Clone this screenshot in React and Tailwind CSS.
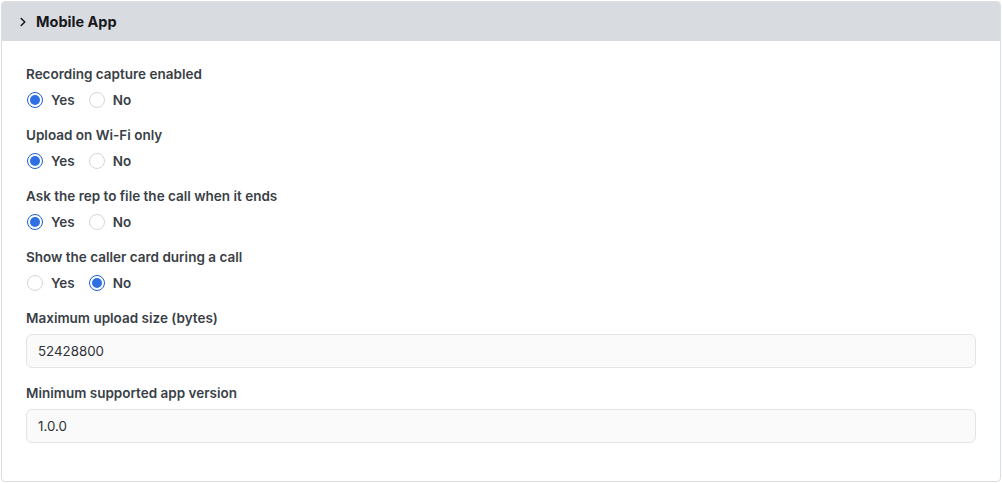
import React, { useState } from 'react';

const font = { fontFamily: 'Inter, "Noto Sans", sans-serif' };

function Radio({ checked, label, onClick }) {
  return (
    <label className="flex items-center gap-[8px] cursor-pointer" onClick={onClick}>
      <span
        className={
          checked
            ? 'w-[16px] h-[16px] rounded-full border border-[#1d5fd6] bg-white flex items-center justify-center'
            : 'w-[16px] h-[16px] rounded-full border border-[#d4d6da] bg-white'
        }
      >
        {checked && <span className="w-[10px] h-[10px] rounded-full bg-[#2f6fe4]" />}
      </span>
      <span className="text-[13.5px] font-semibold text-[#3a3f47] leading-[20px]">{label}</span>
    </label>
  );
}

function YesNo({ title, initial }) {
  const [value, setValue] = useState(initial);
  return (
    <div className="flex flex-col gap-[6px]">
      <div className="text-[13.5px] font-semibold text-[#3a3f47] leading-[20px]">{title}</div>
      <div className="flex items-center gap-[14px] pl-[1px]">
        <Radio checked={value === 'yes'} label="Yes" onClick={() => setValue('yes')} />
        <Radio checked={value === 'no'} label="No" onClick={() => setValue('no')} />
      </div>
    </div>
  );
}

function Field({ title, value }) {
  return (
    <div className="flex flex-col gap-[6px]">
      <div className="text-[13.5px] font-semibold text-[#3a3f47] leading-[20px]">{title}</div>
      <input
        defaultValue={value}
        className="h-[34px] w-full rounded-[6px] border border-[#e3e4e7] bg-[#fafafa] px-[11px] text-[13.3px] text-[#2f3237] outline-none"
        style={font}
      />
    </div>
  );
}

export default function App() {
  return (
    <div className="w-[1002px] h-[483px] bg-white p-[1px]" style={font}>
      <div className="h-[481px] border border-[#dcdde0] rounded-[4px] overflow-hidden flex flex-col">
        <div className="h-[39px] bg-[#d8dbe0] flex items-center gap-[8px] pl-[16px] shrink-0">
          <svg width="10" height="10" viewBox="0 0 10 10" fill="none">
            <path d="M3.2 1.5 L6.8 5 L3.2 8.5" stroke="#16181c" strokeWidth="1.5" strokeLinecap="round" strokeLinejoin="round" />
          </svg>
          <span className="text-[14.5px] font-bold text-[#16181c]">Mobile App</span>
        </div>
        <div className="flex flex-col gap-[15px] px-[24px] pt-[23px]">
          <YesNo title="Recording capture enabled" initial="yes" />
          <YesNo title="Upload on Wi-Fi only" initial="yes" />
          <YesNo title="Ask the rep to file the call when it ends" initial="yes" />
          <YesNo title="Show the caller card during a call" initial="no" />
          <Field title="Maximum upload size (bytes)" value="52428800" />
          <Field title="Minimum supported app version" value="1.0.0" />
        </div>
      </div>
    </div>
  );
}
